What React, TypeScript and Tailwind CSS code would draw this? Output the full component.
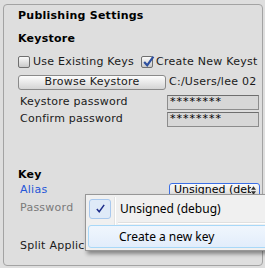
import React from "react";

const ui = { fontFamily: '"DejaVu Sans", Verdana, sans-serif' };
const menuFont = { fontFamily: '"Noto Sans", "Open Sans", sans-serif' };

function CheckBox({ checked }: { checked?: boolean }) {
  return (
    <div className="relative w-[12px] h-[12px] rounded-[2px] border border-[#6f6f6f] bg-gradient-to-b from-[#fafafa] to-[#c9c9c9] shrink-0">
      {checked && (
        <svg viewBox="0 0 12 12" className="absolute left-[0px] top-[-2px] w-[13px] h-[13px]">
          <path d="M2 6.5 L4.8 9.5 L10.5 1.5" stroke="#2d4f9e" strokeWidth="2" fill="none" />
        </svg>
      )}
    </div>
  );
}

function FieldRow({ label }: { label: string }) {
  return (
    <div className="flex items-center h-[17px]">
      <span className="w-[149px] pl-[2px] text-[11px] text-[#1a1a1a]">{label}</span>
      <div className="w-[92px] h-[15px] border border-[#8c8c8c] border-t-[#6e6e6e] bg-[#d7d7d7] text-[11px] leading-[12px] pl-[2px] text-black tracking-[1px]">
        ********
      </div>
    </div>
  );
}

export default function App() {
  return (
    <div className="relative w-[265px] h-[268px] overflow-hidden bg-[#dedede] tracking-[0.25px]" style={ui}>
      <div className="ml-[3px] mt-[4px] w-[260px] h-[262px] border border-[#a3a3a3] rounded-[4px] bg-[#dedede] pl-[14px] pt-[3px]">
        <div className="h-[17px] flex items-center text-[11px] font-bold text-black">Publishing Settings</div>
        <div className="h-[6px]" />
        <div className="h-[16px] flex items-center text-[11px] font-bold text-black">Keystore</div>
        <div className="h-[8px]" />
        <div className="h-[14px] flex items-center text-[11px] text-[#1a1a1a]">
          <CheckBox />
          <span className="ml-[3px] w-[108px] whitespace-nowrap">Use Existing Keys</span>
          <CheckBox checked />
          <span className="ml-[3px] whitespace-nowrap">Create New Keyst</span>
        </div>
        <div className="h-[6px]" />
        <div className="h-[15px] flex items-center text-[11px] text-[#1a1a1a]">
          <div className="w-[148px] h-[15px] rounded-[3px] border border-[#8a8a8a] bg-gradient-to-b from-[#fdfdfd] to-[#d4d4d4] flex items-center justify-center">
            Browse Keystore
          </div>
          <span className="ml-[3px] whitespace-nowrap">C:/Users/lee 02</span>
        </div>
        <div className="h-[4px]" />
        <FieldRow label="Keystore password" />
        <FieldRow label="Confirm password" />
        <div className="h-[40px]" />
        <div className="h-[14px] flex items-center text-[11px] font-bold text-black">Key</div>
        <div className="h-[1px]" />
        <div className="flex items-center h-[15px]">
          <span className="w-[151px] pl-[2px] text-[11px] text-[#2555d8]">Alias</span>
          <div className="w-[91px] h-[15px] rounded-[3px] border border-[#3b6fe6] bg-gradient-to-b from-[#fbfbfb] to-[#d6d6d6] flex items-center pl-[4px] pr-[3px] text-[11px] text-black overflow-hidden tracking-normal">
            <span className="whitespace-nowrap overflow-hidden flex-1">Unsigned (deb</span>
            <svg viewBox="0 0 6 10" className="w-[5px] h-[9px] shrink-0">
              <path d="M0 4 L3 0 L6 4 Z M0 6 L3 10 L6 6 Z" fill="#333" />
            </svg>
          </div>
        </div>
        <div className="h-[2px]" />
        <div className="h-[16px] flex items-center pl-[2px] text-[11px] text-[#7a7a7a]">Password</div>
        <div className="h-[22px]" />
        <div className="h-[16px] flex items-center pl-[2px] text-[11px] text-[#1a1a1a] whitespace-nowrap">Split Application Binary</div>
      </div>

      <div
        className="absolute left-[85px] top-[194px] w-[190px] h-[57px] bg-[#f0f0f0] border border-[#979797] shadow-[2px_3px_4px_rgba(0,0,0,0.4)] p-[2px] flex flex-col tracking-normal"
        style={menuFont}
      >
        <div className="absolute left-[28px] top-[2px] bottom-[2px] w-[2px] border-l border-[#e2e3e3] border-r border-r-white" />
        <div className="relative h-[24px] flex items-center">
          <div className="w-[22px] h-[20px] ml-[1px] rounded-[3px] border border-[#a8c8ee] bg-[#dfeaf8] flex items-center justify-center">
            <svg viewBox="0 0 12 12" className="w-[11px] h-[11px]">
              <path d="M2 6.5 L4.6 9.5 L10 2" stroke="#1b2b8a" strokeWidth="1.6" fill="none" />
            </svg>
          </div>
          <span className="ml-[9px] text-[12px] text-black whitespace-nowrap">Unsigned (debug)</span>
        </div>
        <div className="relative h-[5px] flex items-center pl-[30px]">
          <div className="flex-1 h-[2px] border-t border-[#e0e0e0] border-b border-b-white" />
        </div>
        <div className="relative h-[23px] rounded-[3px] border border-[#a8d8f8] bg-gradient-to-b from-[#f0f6fd] to-[#e2edfb] flex items-center">
          <span className="ml-[30px] text-[12px] text-black whitespace-nowrap">Create a new key</span>
        </div>
      </div>
    </div>
  );
}
